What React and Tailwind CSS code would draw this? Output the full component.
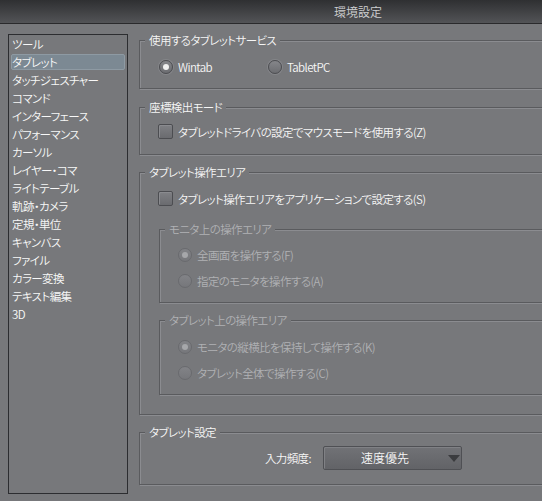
const categories = [
  "ツール",
  "タブレット",
  "タッチジェスチャー",
  "コマンド",
  "インターフェース",
  "パフォーマンス",
  "カーソル",
  "レイヤー・コマ",
  "ライトテーブル",
  "軌跡・カメラ",
  "定規・単位",
  "キャンバス",
  "ファイル",
  "カラー変換",
  "テキスト編集",
  "3D",
];

// etched group frame: dark line with a light line below/right
function Group({ title, disabled = false, className = "", children }) {
  return (
    <div
      className={`relative border border-[#5a5b5e] shadow-[inset_1px_1px_0_#8b8c90,1px_1px_0_#8b8c90] ${className}`}
    >
      <span
        className={`absolute -top-[8px] left-[5px] px-1 bg-[#77787b] leading-[14px] ${
          disabled ? "text-[#b0b1b4]" : "text-[#f6f6f6]"
        }`}
      >
        {title}
      </span>
      {children}
    </div>
  );
}

function Radio({ label, checked = false, disabled = false, className = "" }) {
  return (
    <div className={`flex items-center h-[14px] ${className}`}>
      <div
        className={`w-[14px] h-[14px] rounded-full border flex items-center justify-center shrink-0 ${
          disabled
            ? "border-[#696a6e] bg-gradient-to-b from-[#828387] to-[#76777b]"
            : "border-[#4c4d51] bg-gradient-to-b from-[#85868a] to-[#6c6d71] shadow-[0_0_0_1px_#848589]"
        }`}
      >
        {checked && (
          <div
            className={`w-[6px] h-[6px] rounded-full ${
              disabled ? "bg-[#a6a7aa]" : "bg-[#f0f0f0]"
            }`}
          />
        )}
      </div>
      <span className={`ml-[5px] whitespace-nowrap ${disabled ? "text-[#b0b1b4]" : "text-[#f6f6f6]"}`}>
        {label}
      </span>
    </div>
  );
}

function Checkbox({ label }) {
  return (
    <div className="flex items-center h-[15px]">
      <div className="w-[15px] h-[15px] rounded-[2px] border border-[#4c4d51] bg-gradient-to-b from-[#7f8084] to-[#6a6b6f] shadow-[inset_1px_1px_0_#8a8b8f] shrink-0" />
      <span className="ml-[5px] whitespace-nowrap text-[#f6f6f6]">{label}</span>
    </div>
  );
}

export default function App() {
  return (
    <div className="w-[542px] h-[501px] overflow-hidden bg-[#77787b] text-[11.5px] leading-[14px] tracking-[-0.6px] font-[350] [font-family:'Noto_Sans_CJK_JP','Noto_Sans',sans-serif] [font-feature-settings:'palt']">
      <div className="h-6 flex items-center pl-[334px] bg-gradient-to-b from-[#2f3032] to-[#535457] border-b border-[#2a2a2c] text-[#cfd0d2] text-[12px] tracking-normal">
        環境設定
      </div>

      <div className="flex">
        {/* category list */}
        <div className="ml-2 mt-[10px] w-[120px] h-[460px] border border-[#2c2d30] px-[2px] shrink-0">
          {categories.map((name) => {
            const selected = name === "タブレット";
            return (
              <div key={name} className="h-[18px] flex items-center">
                <div
                  className={`w-full h-[16px] flex items-center rounded-[2px] whitespace-nowrap text-[#f8f8f8] ${
                    selected ? "bg-[#7c8993] border border-[#8e9aa3]" : "pl-[1px]"
                  }`}
                >
                  {name}
                </div>
              </div>
            );
          })}
        </div>

        {/* settings */}
        <div className="ml-[11px] mt-[16px] w-[430px] shrink-0">
          <Group title="使用するタブレットサービス" className="h-[49px] pt-[19px] pl-[19px]">
            <div className="flex">
              <Radio label="Wintab" checked className="w-[109px]" />
              <Radio label="TabletPC" />
            </div>
          </Group>

          <Group title="座標検出モード" className="mt-[18px] h-[48px] pt-[16px] pl-[18px]">
            <Checkbox label="タブレットドライバの設定でマウスモードを使用する(Z)" />
          </Group>

          <Group title="タブレット操作エリア" className="mt-[17px] h-[243px] pt-[18px] pl-[18px]">
            <Checkbox label="タブレット操作エリアをアプリケーションで設定する(S)" />
            <Group title="モニタ上の操作エリア" disabled className="mt-[23px] ml-[1px] h-[74px] pt-[18px] pl-[18px]">
              <div className="flex flex-col gap-[12px]">
                <Radio label="全画面を操作する(F)" checked disabled />
                <Radio label="指定のモニタを操作する(A)" disabled />
              </div>
            </Group>
            <Group title="タブレット上の操作エリア" disabled className="mt-[17px] ml-[1px] h-[75px] pt-[19px] pl-[18px]">
              <div className="flex flex-col gap-[12px]">
                <Radio label="モニタの縦横比を保持して操作する(K)" checked disabled />
                <Radio label="タブレット全体で操作する(C)" disabled />
              </div>
            </Group>
          </Group>

          <Group title="タブレット設定" className="mt-[17px] h-[53px] pt-[13px]">
            <div className="flex items-center">
              <div className="w-[171px] text-right text-[#f6f6f6]">入力頻度:</div>
              <div className="ml-[12px] w-[139px] h-[24px] relative flex items-center justify-center rounded-[2px] border border-[#4f5054] bg-gradient-to-b from-[#717276] to-[#626367] shadow-[inset_1px_1px_0_#808185] text-[#f6f6f6] text-[12px] tracking-normal">
                <span className="-ml-[15px]">速度優先</span>
                <svg className="absolute right-[1px] top-[8px]" width="12" height="7" viewBox="0 0 12 7">
                  <path d="M0 0 H12 L6 7 Z" fill="#3b3c3f" />
                </svg>
              </div>
            </div>
          </Group>
        </div>
      </div>
    </div>
  );
}
